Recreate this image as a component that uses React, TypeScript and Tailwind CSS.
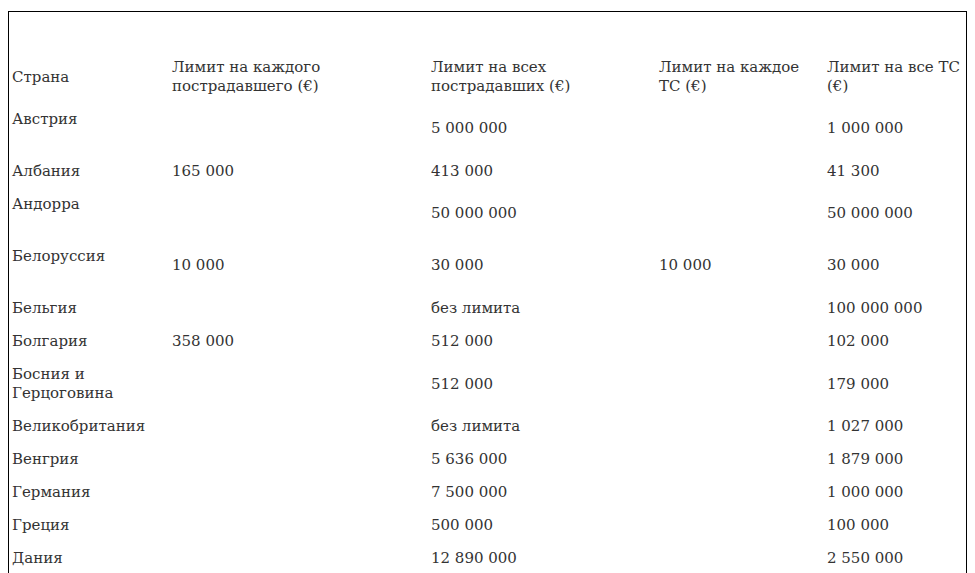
type Row = {
  country: React.ReactNode;
  a?: string;
  b?: string;
  c?: string;
  d?: string;
  h: string;
  top?: string;
};

const rows: Row[] = [
  { country: 'Австрия', b: '5 000 000', d: '1 000 000', h: 'h-[53px]', top: 'pt-[8px]' },
  { country: 'Албания', a: '165 000', b: '413 000', d: '41 300', h: 'h-[33px]' },
  { country: 'Андорра', b: '50 000 000', d: '50 000 000', h: 'h-[51px]', top: 'pt-[7px]' },
  { country: 'Белоруссия', a: '10 000', b: '30 000', c: '10 000', d: '30 000', h: 'h-[53px]', top: 'pt-[8px]' },
  { country: 'Бельгия', b: 'без лимита', d: '100 000 000', h: 'h-[33px]' },
  { country: 'Болгария', a: '358 000', b: '512 000', d: '102 000', h: 'h-[33px]' },
  { country: <>Босния и<br />Герцоговина</>, b: '512 000', d: '179 000', h: 'h-[52px]' },
  { country: 'Великобритания', b: 'без лимита', d: '1 027 000', h: 'h-[33px]' },
  { country: 'Венгрия', b: '5 636 000', d: '1 879 000', h: 'h-[33px]' },
  { country: 'Германия', b: '7 500 000', d: '1 000 000', h: 'h-[33px]' },
  { country: 'Греция', b: '500 000', d: '100 000', h: 'h-[33px]' },
  { country: 'Дания', b: '12 890 000', d: '2 550 000', h: 'h-[33px]' },
];

export default function App() {
  return (
    <div className="h-[573px] overflow-hidden bg-white px-2 pt-[11px] font-['DejaVu_Serif',serif] text-[15px] leading-[19px] text-[#333]">
      <div className="h-[600px] w-[959px] border-x border-t border-black">
        <table className="w-full table-fixed border-collapse">
          <colgroup>
            <col className="w-[160px]" />
            <col className="w-[259px]" />
            <col className="w-[228px]" />
            <col className="w-[168px]" />
            <col />
          </colgroup>
          <tbody>
            <tr className="h-[40px]">
              <td colSpan={5}></td>
            </tr>
            <tr className="h-[50px]">
              <td className="pl-[3px] align-middle">Страна</td>
              <td className="pl-[3px] align-middle">Лимит на каждого<br />пострадавшего (€)</td>
              <td className="pl-[3px] align-middle">Лимит на всех<br />пострадавших (€)</td>
              <td className="pl-[3px] align-middle">Лимит на каждое<br />ТС (€)</td>
              <td className="pl-[3px] align-middle">Лимит на все ТС<br />(€)</td>
            </tr>
            {rows.map((r, i) => (
              <tr key={i} className={r.h}>
                <td className={r.top ? `pl-[3px] align-top ${r.top}` : 'pl-[3px] align-middle'}>{r.country}</td>
                <td className="pl-[3px] align-middle">{r.a}</td>
                <td className="pl-[3px] align-middle">{r.b}</td>
                <td className="pl-[3px] align-middle">{r.c}</td>
                <td className="pl-[3px] align-middle">{r.d}</td>
              </tr>
            ))}
          </tbody>
        </table>
      </div>
    </div>
  );
}
